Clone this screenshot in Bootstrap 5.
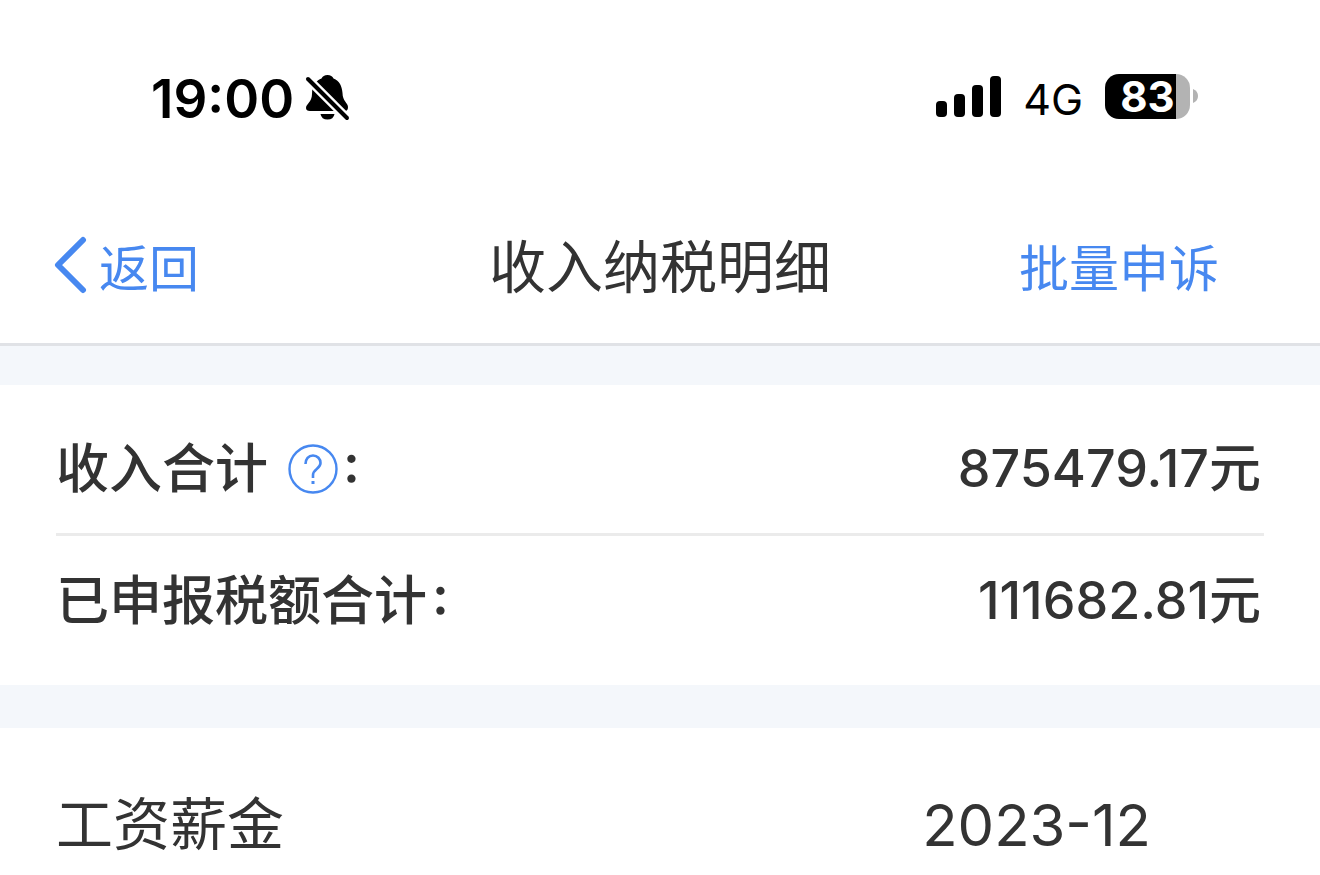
<!DOCTYPE html>
<html lang="zh-CN">
<head>
<meta charset="utf-8">
<meta name="viewport" content="width=device-width, initial-scale=1">
<title>收入纳税明细</title>
<link href="https://cdn.jsdelivr.net/npm/bootstrap@5.3.0/dist/css/bootstrap.min.css" rel="stylesheet">
<style>
  :root { --ink: #333; --accent: #4788f0; --gap-bg: #f4f7fb; }
  body { font-family: Inter, "Noto Sans CJK SC", sans-serif; color: var(--ink); background: #fff; }
  .status-bar { height: 196px; padding: 0 122px 0 151px; color: #000; }
  .clock { font-size: 53px; font-weight: 600; line-height: 64px; padding-top: 2px; }
  .network { font-size: 43px; line-height: 52px; margin: 2px 22px 0 21px; }
  .battery-body { width: 85px; height: 45px; margin-bottom: 3px; border-radius: 14px; font-size: 42px; font-weight: 700; line-height: 46px;
    background: linear-gradient(to right, #000 71px, #b3b3b3 71px); }
  .title-bar { display: grid; grid-template-columns: 1fr auto 1fr; height: 150px; padding: 0 54px 8px; border-bottom: 3px solid #e0e2e6; }
  .title-bar h1 { font-size: 57px; font-weight: 400; line-height: 72px; padding-top: 4px; }
  .nav-action { font-size: 50px; line-height: 64px; color: var(--accent); }
  .nav-label { padding-top: 6px; }
  .nav-end { padding-right: 47px; }
  .band-top { height: 39px; background: var(--gap-bg); }
  .band-mid { height: 43px; background: var(--gap-bg); }
  .totals { padding: 0 56px; }
  .total-row { font-size: 53px; font-weight: 500; line-height: 64px; }
  .total-first { padding: 52px 3px 32px 0; border-bottom: 3px solid #ebebeb; }
  .total-last { padding: 33px 3px 52px 0; }
  .amount { font-size: 52px; }
  .help-btn { margin-left: 20px; }
  .colon { font-feature-settings: "case"; font-weight: 600; margin-left: 5px; }
  .item-row { padding: 61px 169px 11px 56px; font-size: 57px; line-height: 72px; }
  .period { font-size: 58px; font-feature-settings: "case"; }
</style>
</head>
<body>
  <header>
    <div class="status-bar d-flex align-items-center justify-content-between">
      <div class="d-flex align-items-center">
        <span class="clock">19:00</span>
        <svg class="ms-2" width="50" height="50" viewBox="-2 -1 50 50" aria-hidden="true">
          <path d="M6 37q-4 0-4-3c0-4 6-6 6-14C8 11 13 6 17.500 4.500Q19 1 23.500 1T29.500 4.500c6 2 8.500 8 9 14.500 0 8 5.500 10 5.500 14q0 4-3 4z" fill="#000"/>
          <path d="M16.500 40h14q-1 5.500-7 5.500t-7-5.500z" fill="#000"/>
          <path d="M0 1l46 46" stroke="#fff" stroke-width="9"/>
          <path d="M4 5l39 39" stroke="#000" stroke-width="4" stroke-linecap="round"/>
        </svg>
      </div>
      <div class="d-flex align-items-center">
        <svg width="67" height="44" viewBox="0 0 67 44" role="img" aria-label="信号">
          <rect x="1" y="25" width="11" height="16" rx="4"/>
          <rect x="19" y="18" width="11" height="23" rx="4"/>
          <rect x="37" y="9" width="11" height="32" rx="4"/>
          <rect x="55" y="0" width="11" height="41" rx="4"/>
        </svg>
        <span class="network">4G</span>
        <span class="battery-body text-white text-center">83</span>
        <svg width="8" height="18" viewBox="0 0 8 18" aria-hidden="true"><path d="M3 0q5 2 5 7t-5 7z" fill="#b3b3b3"/></svg>
      </div>
    </div>
    <nav class="title-bar align-items-center">
      <a href="#" class="nav-action d-flex align-items-center text-decoration-none">
        <svg width="45" height="60" viewBox="0 0 45 60" aria-hidden="true"><path d="M29 4L4 29l25 25" fill="none" stroke="currentColor" stroke-width="6" stroke-linecap="round" stroke-linejoin="round"/></svg>
        <span class="nav-label">返回</span>
      </a>
      <h1 class="m-0">收入纳税明细</h1>
      <a href="#" class="nav-action nav-label nav-end text-decoration-none text-end">批量申诉</a>
    </nav>
  </header>
  <div class="band-top"></div>
  <main>
    <section class="totals">
      <div class="total-row total-first d-flex justify-content-between">
        <div class="d-flex align-items-center">
          <span>收入合计</span>
          <button type="button" class="btn help-btn border-0 p-0 d-flex" aria-label="说明">
            <svg width="50" height="50" viewBox="0 0 50 50" fill="none" stroke="#4788f0" aria-hidden="true">
              <circle cx="25" cy="25" r="23.5" stroke-width="2.4"/>
              <path d="M17.500 20c0-5 3-8.500 7.500-8.500s7.500 3.500 7.500 7.500c0 6-7.500 6-7.500 12v3" stroke-width="2.600"/>
              <path d="M25 37v3" stroke-width="3"/>
            </svg>
          </button>
          <span class="colon">:</span>
        </div>
        <span class="amount">875479.17元</span>
      </div>
      <div class="total-row total-last d-flex justify-content-between">
        <span>已申报税额合计<span class="colon">:</span></span>
        <span class="amount">111682.81元</span>
      </div>
    </section>
    <div class="band-mid"></div>
    <section class="item-row d-flex justify-content-between">
      <span>工资薪金</span>
      <span class="period">2023-12</span>
    </section>
  </main>
<script src="https://cdn.jsdelivr.net/npm/bootstrap@5.3.0/dist/js/bootstrap.bundle.min.js"></script>
</body>
</html>
